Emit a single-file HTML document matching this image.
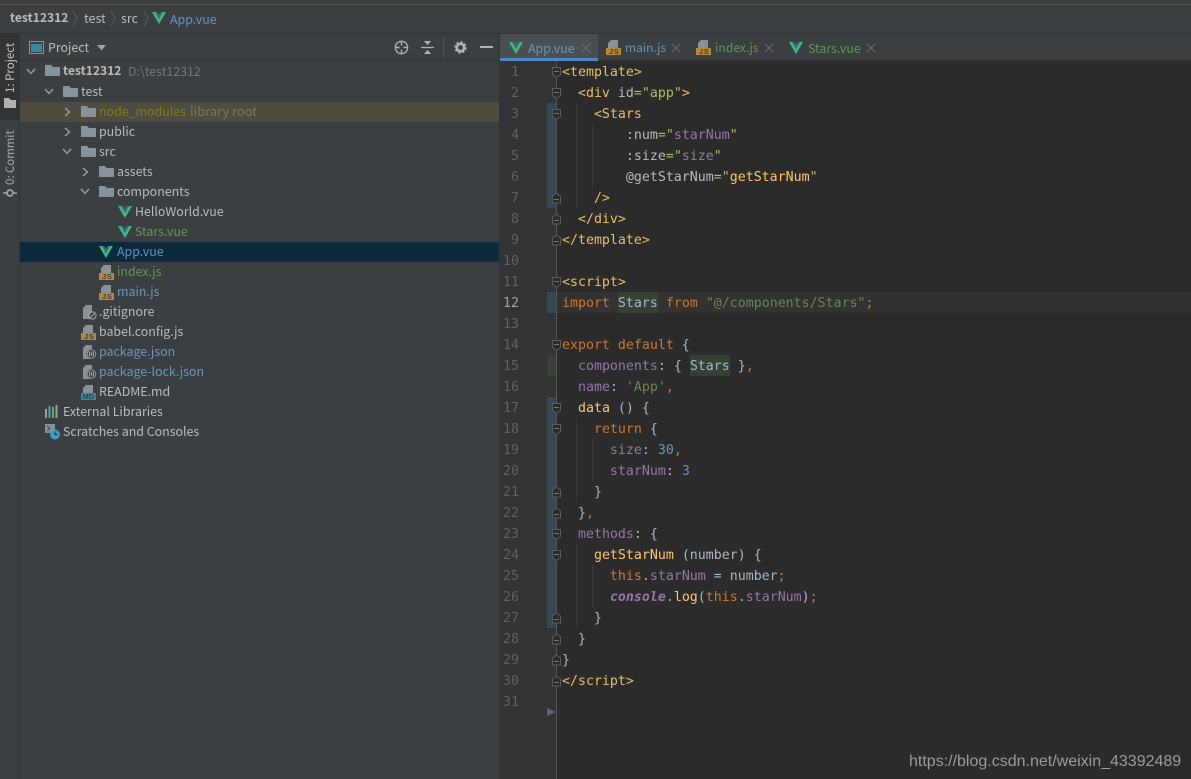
<!DOCTYPE html>
<html><head><meta charset="utf-8">
<style>
html,body{margin:0;padding:0;background:#3c3f41;}
#r{position:relative;width:1191px;height:779px;overflow:hidden;background:#3c3f41;font-family:"Noto Sans CJK SC","Liberation Sans",sans-serif;font-size:12.4px;color:#bbb;}
.a{position:absolute;}
.t{position:absolute;white-space:pre;line-height:20px;height:20px;}
.c{position:absolute;left:562px;white-space:pre;font-family:"DejaVu Sans Mono","Liberation Mono",monospace;font-size:13.28px;line-height:23px;height:21px;color:#a9b7c6;}
.n{position:absolute;left:500px;width:19px;text-align:right;font-family:"DejaVu Sans Mono","Liberation Mono",monospace;font-size:13.28px;line-height:23px;color:#606366;}
.tg{color:#e8bf6a}.at{color:#bababa}.sg{color:#a5c261}.v{color:#9876aa}.k{color:#cc7832}.s{color:#6a8759}.d{color:#6897bb}.f{color:#ffc66d}
.hl{background:#344134;display:inline-block;height:21px;vertical-align:top;line-height:23px}
.b{color:#6897bb}.g{color:#629755}.w{color:#bbb}
.i{position:absolute;overflow:visible;}
.ig{position:absolute;width:1px;background:#3b3b3b;}
.js{font-family:"Liberation Sans",sans-serif;font-weight:700;font-size:7.5px;fill:#3c3f41;letter-spacing:.7px}
</style></head><body>
<div id="r">
<svg width="0" height="0" style="position:absolute">
<defs>
<symbol id="vue" viewBox="0 0 14 12"><path d="M0 0H3L7 7 11 0H14L7 12Z" fill="#3fb984"/><path d="M3 0H5.3L7 3 8.7 0H11L7 7Z" fill="#4b6878"/></symbol>
<symbol id="folder" viewBox="0 0 15 11"><path d="M0 0H6L8 2H15V11H0Z" fill="#87939a"/></symbol>
<symbol id="chr" viewBox="0 0 8 10"><path d="M2 1L6.5 5 2 9" fill="none" stroke="#9a9da0" stroke-width="1.4"/></symbol>
<symbol id="chd" viewBox="0 0 10 8"><path d="M1 2L5 6.5 9 2" fill="none" stroke="#9a9da0" stroke-width="1.4"/></symbol>
<symbol id="x" viewBox="0 0 11 11"><path d="M1 1L10 10M10 1L1 10" stroke="#6b6e70" stroke-width="1.1" fill="none"/></symbol>
<symbol id="fold" viewBox="0 0 9 13"><path d="M.5 .5H8.5V7.500L4.500 10.500 .5 7.500Z" fill="#2b2b2b" stroke="#5a5d5e"/><path d="M2 4.500H7" stroke="#777" stroke-width="1"/></symbol>
<symbol id="foldu" viewBox="0 0 9 13"><path d="M.5 11H8.500V4L4.500 1 .5 4Z" fill="#2b2b2b" stroke="#5a5d5e"/><path d="M2 7.500H7" stroke="#777" stroke-width="1"/></symbol>
<symbol id="jsi" viewBox="0 0 15 15"><path d="M5 0H12V8H2V3Z" fill="#8a9299"/><rect y="8" width="15" height="7" fill="#b6893a"/></symbol>
<symbol id="pk" viewBox="0 0 15 15"><path d="M3 0H9V14H0V3Z" fill="#8a9299"/><circle cx="8.500" cy="9" r="5" fill="#3c3f41"/><circle cx="8.500" cy="9" r="4.300" fill="none" stroke="#8a9299"/><path d="M7 6.500Q6 9 7 11.500M10 6.500Q11 9 10 11.500M8.500 7.500V10.500" stroke="#b8bcbf" fill="none" stroke-width=".9"/></symbol>
</defs>
</svg>

<!-- top -->
<div class="a" style="left:0;top:4px;width:1191px;height:1px;background:#55524e"></div>
<div class="a" style="left:0;top:33px;width:1191px;height:1px;background:#323232"></div>
<div class="t" style="left:10px;top:8px;font-weight:700;color:#bbb;font-size:12.1px">test12312</div>
<svg class="i" style="left:72px;top:11px" width="6" height="15"><path d="M1 0L5 7.5 1 15" fill="none" stroke="#595c5e"/></svg>
<div class="t" style="left:84px;top:8px;font-size:12.5px">test</div>
<svg class="i" style="left:110px;top:11px" width="6" height="15"><path d="M1 0L5 7.5 1 15" fill="none" stroke="#595c5e"/></svg>
<div class="t" style="left:121px;top:8px;font-size:12.5px">src</div>
<svg class="i" style="left:143px;top:11px" width="6" height="15"><path d="M1 0L5 7.5 1 15" fill="none" stroke="#595c5e"/></svg>
<svg class="i" style="left:152px;top:12px" width="14" height="12"><use href="#vue"/></svg>
<div class="t b" style="left:170px;top:9px;color:#5f94c7;font-size:12.4px">App.vue</div>

<!-- left strip -->
<div class="a" style="left:19px;top:34px;width:1px;height:745px;background:#323232"></div>
<div class="a" style="left:0;top:34px;width:19px;height:86px;background:#313335"></div>
<div class="t" style="left:0;top:43px;width:20px;height:50px;line-height:20px;writing-mode:vertical-rl;transform:rotate(180deg);font-size:11.5px;color:#c4c4c4;text-align:left">1: Project</div>
<svg class="i" style="left:4px;top:98px" width="12" height="10"><path d="M0 0H5L7 2H12V10H0Z" fill="#b0b0b0"/></svg>
<div class="t" style="left:0;top:131px;width:20px;height:54px;line-height:20px;writing-mode:vertical-rl;transform:rotate(180deg);font-size:11.4px;color:#a8a8a8;text-align:left">0: Commit</div>
<svg class="i" style="left:3px;top:188px" width="14" height="10"><circle cx="7" cy="5" r="3" fill="none" stroke="#a0a0a0" stroke-width="1.8"/><path d="M0 5H4M10 5H14" stroke="#a0a0a0" stroke-width="1.5"/></svg>

<!-- project header -->
<div class="a" style="left:20px;top:60px;width:479px;height:1px;background:#323232"></div>
<svg class="i" style="left:29px;top:41px" width="15" height="13"><rect x=".5" y=".5" width="14" height="12" fill="none" stroke="#8d9296"/><rect x="2" y="3" width="11" height="8" fill="#3e86a0"/></svg>
<div class="t" style="left:48px;top:37px;color:#bbb">Project</div>
<svg class="i" style="left:97px;top:45px" width="9" height="6"><path d="M0 0H9L4.500 5.500Z" fill="#a0a2a4"/></svg>
<svg class="i" style="left:394px;top:40px" width="15" height="15"><circle cx="7.500" cy="7.500" r="6.200" fill="none" stroke="#afb1b3" stroke-width="1.300"/><path d="M7.500 1V5.500M7.500 9.500V14M1 7.500H5.500M9.500 7.500H14" stroke="#afb1b3" stroke-width="1.400"/></svg>
<svg class="i" style="left:421px;top:40px" width="13" height="15"><path d="M0 7.500H13" stroke="#afb1b3" stroke-width="1.300"/><path d="M3 1H10L6.500 5ZM3 14H10L6.500 10Z" fill="#afb1b3"/></svg>
<div class="a" style="left:443px;top:37px;width:1px;height:20px;background:#515456"></div>
<svg class="i" style="left:454px;top:41px" width="13" height="13"><circle cx="6.500" cy="6.500" r="3.700" fill="none" stroke="#afb1b3" stroke-width="2.600"/><circle cx="6.500" cy="6.500" r="5.400" fill="none" stroke="#afb1b3" stroke-width="1.600" stroke-dasharray="2.300 1.900"/></svg>
<div class="a" style="left:480px;top:46px;width:13px;height:2px;background:#afb1b3"></div>

<!-- tree rows -->
<div class="a" style="left:20px;top:102px;width:479px;height:20px;background:#4f4b41"></div>
<div class="a" style="left:20px;top:242px;width:479px;height:20px;background:#0d293e"></div>

<svg class="i" style="left:26px;top:67px" width="10" height="8"><use href="#chd"/></svg>
<svg class="i" style="left:45px;top:65px" width="15" height="11"><use href="#folder"/></svg>
<div class="t" style="left:63px;top:61px;font-weight:700;color:#bbb;font-size:12.1px">test12312</div>
<div class="t" style="left:128px;top:61px;color:#787878;font-size:12.4px">D:\test12312</div>

<svg class="i" style="left:44px;top:87px" width="10" height="8"><use href="#chd"/></svg>
<svg class="i" style="left:63px;top:86px" width="15" height="11"><use href="#folder"/></svg>
<div class="t" style="left:81px;top:81px">test</div>

<svg class="i" style="left:63px;top:107px" width="8" height="10"><use href="#chr"/></svg>
<svg class="i" style="left:81px;top:106px" width="15" height="11"><use href="#folder"/></svg>
<div class="t" style="left:99px;top:101px;color:#808000">node_modules</div>
<div class="t" style="left:190px;top:101px;color:#77776f;font-size:12.9px">library root</div>

<svg class="i" style="left:63px;top:127px" width="8" height="10"><use href="#chr"/></svg>
<svg class="i" style="left:81px;top:126px" width="15" height="11"><use href="#folder"/></svg>
<div class="t" style="left:99px;top:121px">public</div>

<svg class="i" style="left:62px;top:147px" width="10" height="8"><use href="#chd"/></svg>
<svg class="i" style="left:81px;top:146px" width="15" height="11"><use href="#folder"/></svg>
<div class="t" style="left:99px;top:141px">src</div>

<svg class="i" style="left:81px;top:167px" width="8" height="10"><use href="#chr"/></svg>
<svg class="i" style="left:99px;top:166px" width="15" height="11"><use href="#folder"/></svg>
<div class="t" style="left:117px;top:161px">assets</div>

<svg class="i" style="left:80px;top:187px" width="10" height="8"><use href="#chd"/></svg>
<svg class="i" style="left:99px;top:186px" width="15" height="11"><use href="#folder"/></svg>
<div class="t" style="left:117px;top:181px">components</div>

<svg class="i" style="left:118px;top:206px" width="14" height="12"><use href="#vue"/></svg>
<div class="t" style="left:135px;top:201px">HelloWorld.vue</div>
<svg class="i" style="left:118px;top:226px" width="14" height="12"><use href="#vue"/></svg>
<div class="t g" style="left:135px;top:221px">Stars.vue</div>
<svg class="i" style="left:99px;top:246px" width="14" height="12"><use href="#vue"/></svg>
<div class="t" style="left:117px;top:241px;color:#5f94c7">App.vue</div>

<svg class="i" style="left:99px;top:265px" width="15" height="15"><use href="#jsi" width="15" height="15"/><text class="js" x="3" y="14.200">JS</text></svg>
<div class="t g" style="left:117px;top:261px">index.js</div>
<svg class="i" style="left:99px;top:285px" width="15" height="15"><use href="#jsi" width="15" height="15"/><text class="js" x="3" y="14.200">JS</text></svg>
<div class="t b" style="left:117px;top:281px">main.js</div>

<svg class="i" style="left:83px;top:305px" width="15" height="15"><path d="M3 0H9V14H0V3Z" fill="#8a9299"/><circle cx="9.500" cy="10.500" r="3.600" fill="#3c3f41" stroke="#a8adb0" stroke-width="1"/><path d="M7.500 12.500L11.500 8.500" stroke="#a8adb0"/></svg>
<div class="t w" style="left:99px;top:301px">.gitignore</div>
<svg class="i" style="left:81px;top:325px" width="15" height="15"><use href="#jsi" width="15" height="15"/><text class="js" x="3" y="14.200">JS</text></svg>
<div class="t w" style="left:99px;top:321px">babel.config.js</div>
<svg class="i" style="left:83px;top:345px" width="15" height="15"><use href="#pk" width="15" height="15"/></svg>
<div class="t b" style="left:99px;top:341px">package.json</div>
<svg class="i" style="left:83px;top:365px" width="15" height="15"><use href="#pk" width="15" height="15"/></svg>
<div class="t b" style="left:99px;top:361px">package-lock.json</div>
<svg class="i" style="left:81px;top:385px" width="15" height="15"><path d="M5 0H12V8H2V3Z" fill="#8a9299"/><rect y="8" width="15" height="7" fill="#3a87a8"/><text class="js" x="1.500" y="14.200" style="letter-spacing:0">MD</text></svg>
<div class="t w" style="left:99px;top:381px">README.md</div>

<svg class="i" style="left:45px;top:405px" width="14" height="13"><rect y="4" width="2" height="9" fill="#9a9fa3"/><rect x="3.500" y="1" width="2" height="12" fill="#4aa3bd"/><rect x="7" y="2" width="2" height="11" fill="#62b543"/><rect x="10.500" y="0" width="2" height="13" fill="#9a9fa3"/></svg>
<div class="t w" style="left:63px;top:401px">External Libraries</div>
<svg class="i" style="left:45px;top:424px" width="15" height="16"><path d="M0 0H10V9H0Z" fill="#8a9299"/><path d="M2 2L5 4.500 2 7" fill="none" stroke="#3c3f41"/><circle cx="10" cy="10.500" r="5" fill="#3d9cc9"/><path d="M10 7.500V10.500H12.500" stroke="#2b2b2b" fill="none"/></svg>
<div class="t w" style="left:63px;top:421px">Scratches and Consoles</div>

<!-- divider -->
<div class="a" style="left:499px;top:34px;width:1px;height:745px;background:#323232"></div>

<!-- tabs -->
<div class="a" style="left:500px;top:34px;width:98px;height:24px;background:#4b4f51"></div>
<div class="a" style="left:500px;top:58px;width:98px;height:3px;background:#4a88c7"></div>
<div class="a" style="left:598px;top:60px;width:593px;height:1px;background:#323232"></div>
<svg class="i" style="left:509px;top:42px" width="14" height="12"><use href="#vue"/></svg>
<div class="t" style="left:528px;top:38px;color:#6897bb">App.vue</div>
<svg class="i" style="left:581px;top:43px" width="10" height="10"><use href="#x"/></svg>
<svg class="i" style="left:606px;top:40px" width="15" height="15"><use href="#jsi" width="15" height="15"/><text class="js" x="3" y="14.200">JS</text></svg>
<div class="t b" style="left:625px;top:38px;font-size:12px">main.js</div>
<svg class="i" style="left:671px;top:43px" width="10" height="10"><use href="#x"/></svg>
<svg class="i" style="left:696px;top:40px" width="15" height="15"><use href="#jsi" width="15" height="15"/><text class="js" x="3" y="14.200">JS</text></svg>
<div class="t g" style="left:715px;top:38px;font-size:12.1px">index.js</div>
<svg class="i" style="left:764px;top:43px" width="10" height="10"><use href="#x"/></svg>
<svg class="i" style="left:789px;top:42px" width="14" height="12"><use href="#vue"/></svg>
<div class="t g" style="left:808px;top:38px">Stars.vue</div>
<svg class="i" style="left:866px;top:43px" width="10" height="10"><use href="#x"/></svg>

<!-- editor -->
<div class="a" style="left:500px;top:61px;width:57px;height:718px;background:#313335"></div>
<div class="a" style="left:557px;top:61px;width:634px;height:718px;background:#2b2b2b"></div>
<div class="a" style="left:557px;top:292px;width:634px;height:21px;background:#323232"></div>
<div class="a" style="left:556px;top:61px;width:1px;height:718px;background:#555"></div>
<div class="a" style="left:547px;top:103px;width:9px;height:105px;background:#374754"></div>
<div class="a" style="left:547px;top:292px;width:9px;height:21px;background:#374754"></div>
<div class="a" style="left:547px;top:355px;width:9px;height:21px;background:#344134"></div>
<div class="a" style="left:547px;top:397px;width:9px;height:231px;background:#374754"></div>
<svg class="i" style="left:547px;top:707px" width="9" height="10"><path d="M0 1L9 5 0 9Z" fill="#5c6670"/></svg>

<div class="ig" style="left:576px;top:103px;height:105px"></div>
<div class="ig" style="left:592px;top:124px;height:63px"></div>
<div class="ig" style="left:576px;top:418px;height:84px"></div>
<div class="ig" style="left:592px;top:439px;height:42px"></div>
<div class="ig" style="left:576px;top:544px;height:84px"></div>
<div class="ig" style="left:592px;top:565px;height:42px"></div>

<!-- fold markers -->
<svg class="i" style="left:552px;top:67px" width="9" height="13"><use href="#fold"/></svg>
<svg class="i" style="left:552px;top:88px" width="9" height="13"><use href="#fold"/></svg>
<svg class="i" style="left:552px;top:109px" width="9" height="13"><use href="#fold"/></svg>
<svg class="i" style="left:552px;top:192px" width="9" height="13"><use href="#foldu"/></svg>
<svg class="i" style="left:552px;top:213px" width="9" height="13"><use href="#foldu"/></svg>
<svg class="i" style="left:552px;top:234px" width="9" height="13"><use href="#foldu"/></svg>
<svg class="i" style="left:552px;top:277px" width="9" height="13"><use href="#fold"/></svg>
<svg class="i" style="left:552px;top:340px" width="9" height="13"><use href="#fold"/></svg>
<svg class="i" style="left:552px;top:403px" width="9" height="13"><use href="#fold"/></svg>
<svg class="i" style="left:552px;top:424px" width="9" height="13"><use href="#fold"/></svg>
<svg class="i" style="left:552px;top:486px" width="9" height="13"><use href="#foldu"/></svg>
<svg class="i" style="left:552px;top:507px" width="9" height="13"><use href="#foldu"/></svg>
<svg class="i" style="left:552px;top:529px" width="9" height="13"><use href="#fold"/></svg>
<svg class="i" style="left:552px;top:550px" width="9" height="13"><use href="#fold"/></svg>
<svg class="i" style="left:552px;top:612px" width="9" height="13"><use href="#foldu"/></svg>
<svg class="i" style="left:552px;top:633px" width="9" height="13"><use href="#foldu"/></svg>
<svg class="i" style="left:552px;top:654px" width="9" height="13"><use href="#foldu"/></svg>
<svg class="i" style="left:552px;top:675px" width="9" height="13"><use href="#foldu"/></svg>

<!-- line numbers -->
<div class="n" style="top:61px">1</div>
<div class="n" style="top:82px">2</div>
<div class="n" style="top:103px">3</div>
<div class="n" style="top:124px">4</div>
<div class="n" style="top:145px">5</div>
<div class="n" style="top:166px">6</div>
<div class="n" style="top:187px">7</div>
<div class="n" style="top:208px">8</div>
<div class="n" style="top:229px">9</div>
<div class="n" style="top:250px">10</div>
<div class="n" style="top:271px">11</div>
<div class="n" style="top:292px;color:#a4a3a3">12</div>
<div class="n" style="top:313px">13</div>
<div class="n" style="top:334px">14</div>
<div class="n" style="top:355px">15</div>
<div class="n" style="top:376px">16</div>
<div class="n" style="top:397px">17</div>
<div class="n" style="top:418px">18</div>
<div class="n" style="top:439px">19</div>
<div class="n" style="top:460px">20</div>
<div class="n" style="top:481px">21</div>
<div class="n" style="top:502px">22</div>
<div class="n" style="top:523px">23</div>
<div class="n" style="top:544px">24</div>
<div class="n" style="top:565px">25</div>
<div class="n" style="top:586px">26</div>
<div class="n" style="top:607px">27</div>
<div class="n" style="top:628px">28</div>
<div class="n" style="top:649px">29</div>
<div class="n" style="top:670px">30</div>
<div class="n" style="top:691px">31</div>

<!-- code -->
<div class="c tg" style="top:61px">&lt;template&gt;</div>
<div class="c tg" style="top:82px">  &lt;div <span class="at">id</span><span class="sg">="app"</span>&gt;</div>
<div class="c tg" style="top:103px">    &lt;Stars</div>
<div class="c at" style="top:124px">        :num<span class="sg">="</span><span class="v">starNum</span><span class="sg">"</span></div>
<div class="c at" style="top:145px">        :size<span class="sg">="</span><span class="v">size</span><span class="sg">"</span></div>
<div class="c at" style="top:166px">        @getStarNum<span class="sg">="</span><span class="f">getStarNum</span><span class="sg">"</span></div>
<div class="c tg" style="top:187px">    /&gt;</div>
<div class="c tg" style="top:208px">  &lt;/div&gt;</div>
<div class="c tg" style="top:229px">&lt;/template&gt;</div>
<div class="c tg" style="top:271px">&lt;script&gt;</div>
<div class="c" style="top:292px"><span class="k">import</span> <span class="hl">Stars</span> <span class="k">from</span> <span class="s">"@/components/Stars"</span><span class="k">;</span></div>
<div class="c" style="top:334px"><span class="k">export default</span> {</div>
<div class="c" style="top:355px">  <span class="v">components</span>: { <span class="hl">Stars</span> }<span class="k">,</span></div>
<div class="c" style="top:376px">  <span class="v">name</span>: <span class="s">'App'</span><span class="k">,</span></div>
<div class="c" style="top:397px">  <span class="f">data</span> () {</div>
<div class="c" style="top:418px">    <span class="k">return</span> {</div>
<div class="c" style="top:439px">      <span class="v">size</span>: <span class="d">30</span><span class="k">,</span></div>
<div class="c" style="top:460px">      <span class="v">starNum</span>: <span class="d">3</span></div>
<div class="c" style="top:481px">    }</div>
<div class="c" style="top:502px">  }<span class="k">,</span></div>
<div class="c" style="top:523px">  <span class="v">methods</span>: {</div>
<div class="c" style="top:544px">    <span class="f">getStarNum</span> (number) {</div>
<div class="c" style="top:565px">      <span class="k">this</span>.<span class="v">starNum</span> = number<span class="k">;</span></div>
<div class="c" style="top:586px">      <span class="v" style="font-style:italic;font-weight:700">console</span>.<span class="f">log</span>(<span class="k">this</span>.<span class="v">starNum</span>)<span class="k">;</span></div>
<div class="c" style="top:607px">    }</div>
<div class="c" style="top:628px">  }</div>
<div class="c" style="top:649px">}</div>
<div class="c tg" style="top:670px">&lt;/script&gt;</div>

<!-- watermark -->
<div class="a" style="left:909px;top:752px;white-space:pre;font-family:'Liberation Sans',sans-serif;font-size:16px;line-height:20px;color:#9c9c9c">https://blog.csdn.net/weixin_43392489</div>
</div>
</body></html>
